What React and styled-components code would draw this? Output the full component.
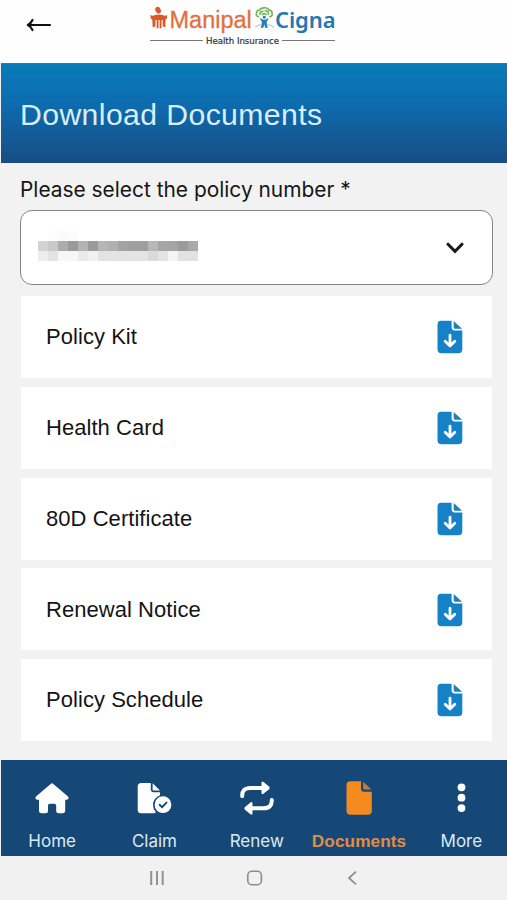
import React from 'react';
import styled, { createGlobalStyle } from 'styled-components';

const GlobalStyle = createGlobalStyle`
    * {
        box-sizing: border-box;
    }
    body {
        margin: 0;
        background: #f2f2f3;
        font-family: "Liberation Sans", Arial, sans-serif;
    }
`
const Screen = styled.div`
    width: 507px;
    height: 900px;
    display: flex;
    flex-direction: column;
    overflow: hidden;
    background: #f2f2f3;
`
const Header = styled.header`
    height: 63px;
    display: flex;
    align-items: flex-start;
    background: #fefefe;
`
const BackButton = styled.button`
    width: 150px;
    height: 50px;
    padding: 0 0 0 26px;
    border: none;
    background: none;
    display: flex;
    align-items: center;
`
const Brand = styled.div`
    width: 185px;
    padding-top: 6px;
`
const BrandRow = styled.div`
    height: 29px;
    display: flex;
    align-items: flex-start;
`
const BrandName = styled.span`
    width: ${props => props.$width};
    flex-shrink: 0;
    font-family: ${props => props.$font};
    font-size: ${props => props.$size};
    font-weight: ${props => props.$weight};
    letter-spacing: ${props => props.$spacing};
    color: ${props => props.$color};
    line-height: ${props => props.$line};
    white-space: nowrap;
    -webkit-text-stroke: ${props => props.$stroke || "0"};
`
const Tagline = styled.div`
    display: flex;
    align-items: center;
    justify-content: space-between;
    height: 11px;
    font-family: "DejaVu Sans", sans-serif;
    font-size: 8.6px;
    color: #333;
    white-space: nowrap;
    -webkit-text-stroke: 0.2px #333;
`
const Rule = styled.span`
    width: 53px;
    height: 1px;
    background: #777;
`
const Banner = styled.div`
    height: 100px;
    margin-left: 1px;
    padding: 3px 0 0 19px;
    display: flex;
    align-items: center;
    border-top: 1px solid #3e7790;
    background: linear-gradient(#087bb9, #0d6caf 40%, #174d85);
`
const Title = styled.h1`
    margin: 0;
    font-size: 30.2px;
    font-weight: normal;
    letter-spacing: 0.4px;
    color: #d9eefb;
    white-space: nowrap;
`
const Content = styled.main`
    height: 596.5px;
    padding: 13px 14.5px 0 20px;
`
const Label = styled.div`
    height: 34px;
    font-family: Inter, sans-serif;
    font-size: 20.9px;
    line-height: 28px;
    color: #161616;
    white-space: nowrap;
`
const Select = styled.div`
    height: 75px;
    border: 1.3px solid #858585;
    border-radius: 12px;
    padding: 0 27.5px 0 17px;
    display: flex;
    align-items: center;
    justify-content: space-between;
    background: #fff;
`
const Mosaic = styled.div`
    display: grid;
    grid-template-columns: repeat(16, 10px);
    grid-auto-rows: 10px;
    margin-bottom: 3px;
`
const Pixel = styled.span`
    background: ${props => props.$color};
`
const List = styled.div`
    margin: 11px 1px 0;
    display: flex;
    flex-direction: column;
    gap: 8.8px;
`
const Card = styled.div`
    height: 82px;
    padding: 0.6px 28.3px 0 25px;
    display: flex;
    align-items: center;
    justify-content: space-between;
    background: #fff;
`
const CardTitle = styled.span`
    font-size: 22px;
    letter-spacing: 0.05px;
    color: #141414;
`
const Nav = styled.nav`
    height: 96.5px;
    margin-left: 1px;
    display: flex;
    background: #154777;
`
const NavItem = styled.div`
    width: 102.3px;
    flex-shrink: 0;
    padding-top: 17.5px;
    display: flex;
    flex-direction: column;
    align-items: center;
    color: ${props => props.$active ? "#f58a1f" : "#fff"};
`
const NavLabel = styled.span`
    margin-top: 8px;
    font-family: ${props => props.$active ? '"Liberation Sans", sans-serif' : 'Inter, sans-serif'};
    font-size: ${props => props.$active ? "17.2px" : "17px"};
    font-weight: ${props => props.$active ? "bold" : "normal"};
    line-height: 28px;
    letter-spacing: ${props => props.$active ? "0.1px" : "0"};
    color: ${props => props.$active ? "#e38c43" : "#dceaf6"};
    white-space: nowrap;
`
const SystemBar = styled.div`
    height: 44px;
    padding-left: 149px;
    display: flex;
    align-items: center;
    gap: 82px;
    background: #f1f1f1;
`

const pixelRows = [
    ["#fff", "#fcfcfc", "#fafafa", "#fcfcfc", "#fff", "#fff", "#fff", "#fff", "#fff", "#fff", "#fff", "#fff", "#fff", "#fff", "#fff", "#fff"],
    ["#d3d3d3", "#c9c9c9", "#adadad", "#9a9a9a", "#b3b3b3", "#9b9b9b", "#b6b6b6", "#b0b0b0", "#a3a3a3", "#9f9f9f", "#9f9f9f", "#b7b7b7", "#a6a6a6", "#a4a4a4", "#9b9b9b", "#a9a9a9"],
    ["#ededed", "#e3e3e3", "#f7f7f7", "#f7f7f7", "#eaeaea", "#f1f1f1", "#e2e2e2", "#e4e4e4", "#e4e4e4", "#e4e4e4", "#e4e4e4", "#dadada", "#e3e3e3", "#f4f4f4", "#e2e2e2", "#e2e2e2"],
];

const documents = [
    { title: "Policy Kit" },
    { title: "Health Card" },
    { title: "80D Certificate" },
    { title: "Renewal Notice" },
    { title: "Policy Schedule" },
];

const BackIcon = () => (
    <svg width="26" height="14" viewBox="0 0 26 14" fill="none" stroke="#111" strokeWidth="2.2" strokeLinecap="round" strokeLinejoin="round">
        <path d="M24 7H1.8M6.5 2Q5 5.5 1.8 7Q5 8.5 6.5 12" />
    </svg>
)

const PotIcon = () => (
    <svg width="20" height="24" viewBox="0 0 20 24" fill="#d95a2b">
        <ellipse cx="8.3" cy="4" rx="2.7" ry="3.6" transform="rotate(-25 8.3 4)" />
        <path d="M.3 8.8Q2.5 10.3 5 9Q9 7.6 13 9Q15.5 10.3 17.7 8.8L17.2 12.8Q15 14.2 9 14.1Q3 14.2 .8 12.8Z" />
        <path d="M2.3 12H5.5V20Q5.5 21.5 2.7 21.5ZM6.8 12H8.7V22.5H6.8ZM9.9 12H11.8V22.5H9.9ZM13 12H16L15.7 21.5Q13 21.5 13 20Z" />
    </svg>
)

const TreeIcon = () => (
    <svg width="22" height="23" viewBox="0 0 22 23" fill="none">
        <g stroke="#70b957" strokeWidth="1.7" strokeLinecap="round">
            <path d="M4.5 10.7Q1.5 10 2.6 7Q2.5 4 5.6 4Q7 1.4 10.5 1.6Q14 1.2 15.4 4Q18.5 4 18.5 7Q19.3 10 16.3 10.7" />
            <path d="M6 8.2Q6 5.4 9 5.2M11.5 4.8Q15 4.5 14.8 8.2M8.5 8.4Q10.5 6.6 12.5 8.4" />
        </g>
        <circle cx="10.5" cy="11.3" r="1.5" fill="#247cb5" />
        <path d="M6 11.7Q8 13.7 10.5 13.7Q13 13.7 15 11.7Q14.5 14.4 13 15.5Q12.8 19 14.2 22H11.4L10.5 18.5L9.6 22H6.8Q8.2 19 8 15.5Q6.5 14.4 6 11.7Z" fill="#247cb5" />
        <path d="M1 21.5Q4.5 18.5 7.5 19M13.5 19Q17 18.5 20.5 21.5" stroke="#8cc8a0" strokeWidth="1" />
    </svg>
)

const ChevronIcon = () => (
    <svg width="18" height="12" viewBox="0 0 18 12" fill="none" stroke="#181818" strokeWidth="3" strokeLinecap="round">
        <path d="M2 2.2L9 9.3L16 2.2" />
    </svg>
)

const DownloadIcon = () => (
    <svg width="26" height="34" viewBox="0 0 26 34">
        <path d="M4 .7H14.6V7.3Q14.6 10.4 17.7 10.4H25.3V29.3Q25.3 33.3 21.3 33.3H4.5Q.5 33.3 .5 29.3V4.7Q.5 .7 4 .7Z" fill="#1582c7" />
        <path d="M16.7 .9L25 8.7H18Q16.7 8.7 16.7 7.4Z" fill="#247fb3" />
        <path d="M13 15.2V25.5M8.2 21.3L13 26L17.8 21.3" fill="none" stroke="#fff" strokeWidth="2.8" strokeLinecap="round" strokeLinejoin="round" />
    </svg>
)

const HomeIcon = () => (
    <svg width="36" height="42" viewBox="0 0 36 42" fill="currentColor">
        <path d="M16.7 6.9Q18 5.8 19.3 6.9L34 19.6Q35.6 22.3 32.8 22.7H31.2V33.5Q31.2 36.2 28.5 36.2H24.5Q22.2 36.2 22.2 34V28.6Q22.2 26.7 20.3 26.7H16Q14 26.7 14 28.6V34Q14 36.2 11.7 36.2H7.7Q5 36.2 5 33.5V22.7H3.2Q.4 22.3 2 19.6Z" />
    </svg>
)

const ClaimIcon = () => (
    <svg width="36" height="42" viewBox="0 0 36 42" fill="currentColor">
        <path d="M5.2 6H14.8V12Q14.8 15.3 18 15.3H24V18.3Q17 21.3 17 28Q17 32.4 20 35.6Q19 36.2 17.5 36.2H5.2Q1.7 36.2 1.7 32.7V9.5Q1.7 6 5.2 6Z" />
        <path d="M16.6 6.3L24 13.5H17.8Q16.6 13.5 16.6 12.3Z" />
        <circle cx="27" cy="27.7" r="8.4" />
        <path d="M23.6 27.8L26.1 30.2L30.5 25.6" fill="none" stroke="#154777" strokeWidth="1.9" strokeLinecap="round" />
    </svg>
)

const RenewIcon = () => (
    <svg width="36" height="42" viewBox="0 0 36 42" fill="currentColor">
        <path d="M3.2 19.1Q3 10.9 11.5 10.9H23" fill="none" stroke="currentColor" strokeWidth="4" strokeLinecap="round" />
        <path d="M22.5 6Q22.5 3.3 24.8 5.2L30 9.5Q31.5 10.9 30 12.3L24.8 16.5Q22.5 18.3 22.5 15.5Z" />
        <path d="M32.8 23.1Q33 31.3 24.5 31.3H13" fill="none" stroke="currentColor" strokeWidth="4" strokeLinecap="round" />
        <path d="M13.5 26.7Q13.5 24 11.2 25.8L6 29.9Q4.5 31.3 6 32.7L11.2 37Q13.5 38.8 13.5 36.1Z" />
    </svg>
)

const DocumentIcon = () => (
    <svg width="36" height="42" viewBox="0 0 36 42" fill="currentColor">
        <path d="M9.5 4.2H20V11.7Q20 14.7 23 14.7H30.8V33.7Q30.8 37.7 26.8 37.7H9.5Q5.5 37.7 5.5 33.7V8.2Q5.5 4.2 9.5 4.2Z" />
        <path d="M22.2 4.8L30.3 12.5H23.5Q22.2 12.5 22.2 11.2Z" fill="#c87c3c" />
    </svg>
)

const MoreIcon = () => (
    <svg width="36" height="42" viewBox="0 0 36 42" fill="currentColor">
        <circle cx="18.5" cy="10.3" r="3.9" />
        <circle cx="18.5" cy="20.7" r="3.9" />
        <circle cx="18.5" cy="31.1" r="3.9" />
    </svg>
)

const RecentsIcon = () => (
    <svg width="16" height="16" viewBox="0 0 16 16" fill="none" stroke="#929292" strokeWidth="2">
        <path d="M2.2 1V15M8 1V15M13.7 1V15" />
    </svg>
)

const SystemHomeIcon = () => (
    <svg width="16" height="16" viewBox="0 0 16 16" fill="none" stroke="#8c8c8c" strokeWidth="1.6">
        <rect x=".8" y="1.3" width="13.6" height="13.4" rx="4" />
    </svg>
)

const SystemBackIcon = () => (
    <svg width="14" height="16" viewBox="0 0 14 16" fill="none" stroke="#8c8c8c" strokeWidth="1.7">
        <path d="M11 1.7L4 8L11 14.3" />
    </svg>
)

const navItems = [
    { label: "Home", Icon: HomeIcon },
    { label: "Claim", Icon: ClaimIcon },
    { label: "Renew", Icon: RenewIcon },
    { label: "Documents", Icon: DocumentIcon, active: true },
    { label: "More", Icon: MoreIcon },
];

const App = () => {
    return (
        <Screen>
            <GlobalStyle />
            <Header>
                <BackButton aria-label="Back"><BackIcon /></BackButton>
                <Brand>
                    <BrandRow>
                        <PotIcon />
                        <BrandName $font='"Liberation Sans", sans-serif' $size="23.5px" $width="84px" $line="29px" $weight="normal" $spacing="0" $color="#e2703f" $stroke="0.3px #e2703f">Manipal</BrandName>
                        <TreeIcon />
                        <BrandName $font='"Noto Sans", sans-serif' $size="22px" $width="60px" $line="27px" $weight="600" $spacing="-0.1px" $color="#2377b3">Cigna</BrandName>
                    </BrandRow>
                    <Tagline><Rule />Health Insurance<Rule /></Tagline>
                </Brand>
            </Header>
            <Banner>
                <Title>Download Documents</Title>
            </Banner>
            <Content>
                <Label>Please select the policy number *</Label>
                <Select>
                    <Mosaic>
                        {pixelRows.flat().map((color, i) => <Pixel key={i} $color={color} />)}
                    </Mosaic>
                    <ChevronIcon />
                </Select>
                <List>
                    {documents.map(item => (
                        <Card key={item.title}>
                            <CardTitle>{item.title}</CardTitle>
                            <DownloadIcon />
                        </Card>
                    ))}
                </List>
            </Content>
            <Nav>
                {navItems.map(({ label, Icon, active }) => (
                    <NavItem key={label} $active={active}>
                        <Icon />
                        <NavLabel $active={active}>{label}</NavLabel>
                    </NavItem>
                ))}
            </Nav>
            <SystemBar>
                <RecentsIcon />
                <SystemHomeIcon />
                <SystemBackIcon />
            </SystemBar>
        </Screen>
    )
}

export default App
